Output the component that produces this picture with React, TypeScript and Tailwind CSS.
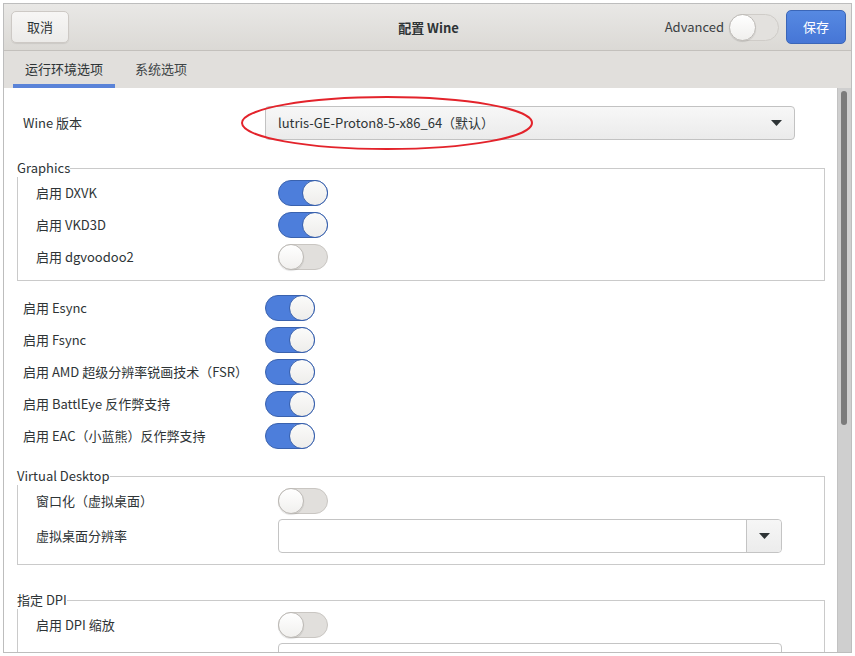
import React from "react";

const FONT = { fontFamily: '"Noto Sans CJK SC", "Noto Sans", sans-serif' };

function Switch({ on }: { on: boolean }) {
  return on ? (
    <div className="flex h-[26px] w-[50px] shrink-0 justify-end rounded-full border border-[#3a62ae] bg-[#4d7edb]">
      <div className="-m-px h-[26px] w-[26px] rounded-full border border-[#3a62ae] bg-linear-to-b from-[#fbfbfa] to-[#eeedeb]" />
    </div>
  ) : (
    <div className="flex h-[26px] w-[50px] shrink-0 justify-start rounded-full border border-[#c9c6c2] bg-[#e1dfdc]">
      <div className="-m-px h-[26px] w-[26px] rounded-full border border-[#bcb9b5] bg-linear-to-b from-[#ffffff] to-[#f1f0ee] shadow-[0_1px_1px_rgba(0,0,0,0.12)]" />
    </div>
  );
}

function Arrow() {
  return (
    <svg width="11" height="6" viewBox="0 0 11 6">
      <polygon points="0,0 11,0 5.5,6" fill="#2e3436" />
    </svg>
  );
}

function Row({ label, on }: { label: string; on: boolean }) {
  return (
    <div className="flex h-[32px] items-center">
      <div className="w-[242px] shrink-0">{label}</div>
      <Switch on={on} />
    </div>
  );
}

function Combo({ className = "" }: { className?: string }) {
  return (
    <div className={"flex h-[34px] w-[504px] shrink-0 rounded-[4px] border border-[#c4c4c4] bg-white " + className}>
      <div className="flex-1" />
      <div className="flex w-[35px] items-center justify-center rounded-r-[4px] border-l border-[#c4c4c4] bg-linear-to-b from-[#f6f6f6] to-[#ececec]">
        <Arrow />
      </div>
    </div>
  );
}

function Frame({ title, className = "", children }: { title: string; className?: string; children: React.ReactNode }) {
  return (
    <fieldset className={"border border-[#cacaca] " + className}>
      <legend className="-ml-px text-[13px] leading-[18px]">{title}</legend>
      {children}
    </fieldset>
  );
}

export default function App() {
  return (
    <div className="h-[656px] w-[855px] overflow-hidden bg-white text-[13px] text-[#2e3436]" style={FONT}>
      <div className="ml-[3px] mt-[3px] flex h-[650px] w-[849px] flex-col border border-[#bdbdbd]">
        {/* Header */}
        <div className="grid h-[47px] shrink-0 grid-cols-[1fr_auto_1fr] items-center border-b border-[#c3c0bc] bg-linear-to-b from-[#e9e8e6] to-[#dbd9d5] pl-[7px] pr-[5px]">
          <div className="flex">
            <div className="flex h-[32px] w-[58px] items-center justify-center rounded-[5px] border border-[#cdc9c5] bg-linear-to-b from-[#f7f6f5] to-[#ecebe9] shadow-[0_1px_1px_rgba(0,0,0,0.08)]">
              取消
            </div>
          </div>
          <div className="pt-px font-bold">配置 Wine</div>
          <div className="flex items-center justify-end">
            <span className="mr-[5px] text-[#3b4043]">Advanced</span>
            <div className="flex h-[27px] w-[50px] justify-start rounded-full border border-[#cfccc8] bg-[#e3e1de]">
              <div className="-m-px h-[27px] w-[27px] rounded-full border border-[#bdbab6] bg-linear-to-b from-[#ffffff] to-[#f0efed] shadow-[0_1px_1px_rgba(0,0,0,0.12)]" />
            </div>
            <div className="ml-[7px] flex h-[34px] w-[60px] items-center justify-center rounded-[5px] border border-[#3b66b8] bg-linear-to-b from-[#5689e2] to-[#4676d6] text-white">
              保存
            </div>
          </div>
        </div>
        {/* Tabs */}
        <div className="flex h-[37px] shrink-0 items-stretch bg-[#e1dfdc] pl-[9px]">
          <div className="flex items-center border-b-[4px] border-[#5a83d8] px-[12px] pt-[2px]">运行环境选项</div>
          <div className="flex items-center border-b-[4px] border-transparent pl-[20px] pr-[12px] pt-[2px] text-[#3e4446]">系统选项</div>
        </div>
        {/* Body */}
        <div className="flex min-h-0 flex-1">
          <div className="relative flex-1 overflow-hidden bg-white pl-[13px] pr-[12px] pt-[18px]">
            <div className="flex h-[34px] items-center pl-[6px]">
              <div className="w-[242px] shrink-0">Wine 版本</div>
              <div className="flex h-[34px] w-[530px] items-center justify-between rounded-[4px] border border-[#c2c2c2] bg-linear-to-b from-[#f7f7f7] to-[#ebebeb] pl-[12px] pr-[12px]">
                <span>lutris-GE-Proton8-5-x86_64（默认）</span>
                <Arrow />
              </div>
            </div>

            <Frame title="Graphics" className="mt-[19px] pb-[7px]">
              <div className="pl-[18px]">
                <Row label="启用 DXVK" on />
                <Row label="启用 VKD3D" on />
                <Row label="启用 dgvoodoo2" on={false} />
              </div>
            </Frame>

            <div className="mt-[11px] pl-[6px]">
              <Row label="启用 Esync" on />
              <Row label="启用 Fsync" on />
              <Row label="启用 AMD 超级分辨率锐画技术（FSR）" on />
              <Row label="启用 BattlEye 反作弊支持" on />
              <Row label="启用 EAC（小蓝熊）反作弊支持" on />
            </div>

            <Frame title="Virtual Desktop" className="mt-[15px] pb-[11px]">
              <div className="pl-[18px]">
                <Row label="窗口化（虚拟桌面）" on={false} />
                <div className="mt-[2px] flex h-[34px] items-center">
                  <div className="w-[242px] shrink-0">虚拟桌面分辨率</div>
                  <Combo />
                </div>
              </div>
            </Frame>

            <Frame title="指定 DPI" className="mt-[26px] pb-[11px]">
              <div className="pl-[18px]">
                <Row label="启用 DPI 缩放" on={false} />
                <div className="mt-[2px] flex h-[34px] items-center">
                  <div className="w-[242px] shrink-0" />
                  <div className="h-[34px] w-[504px] rounded-[4px] border border-[#c4c4c4] bg-white" />
                </div>
              </div>
            </Frame>

            <svg className="pointer-events-none absolute left-[237px] top-[8px]" width="293" height="55" viewBox="0 0 293 55">
              <ellipse cx="146" cy="27" rx="145" ry="26" fill="none" stroke="#e3232b" strokeWidth="2" />
            </svg>
          </div>
          {/* Scrollbar */}
          <div className="w-[14px] shrink-0 border-l border-[#c2c2c2] bg-[#cfcfcf] pt-[3px]">
            <div className="ml-[3px] h-[334px] w-[6px] rounded-full bg-[#7b7b7b]" />
          </div>
        </div>
      </div>
    </div>
  );
}
